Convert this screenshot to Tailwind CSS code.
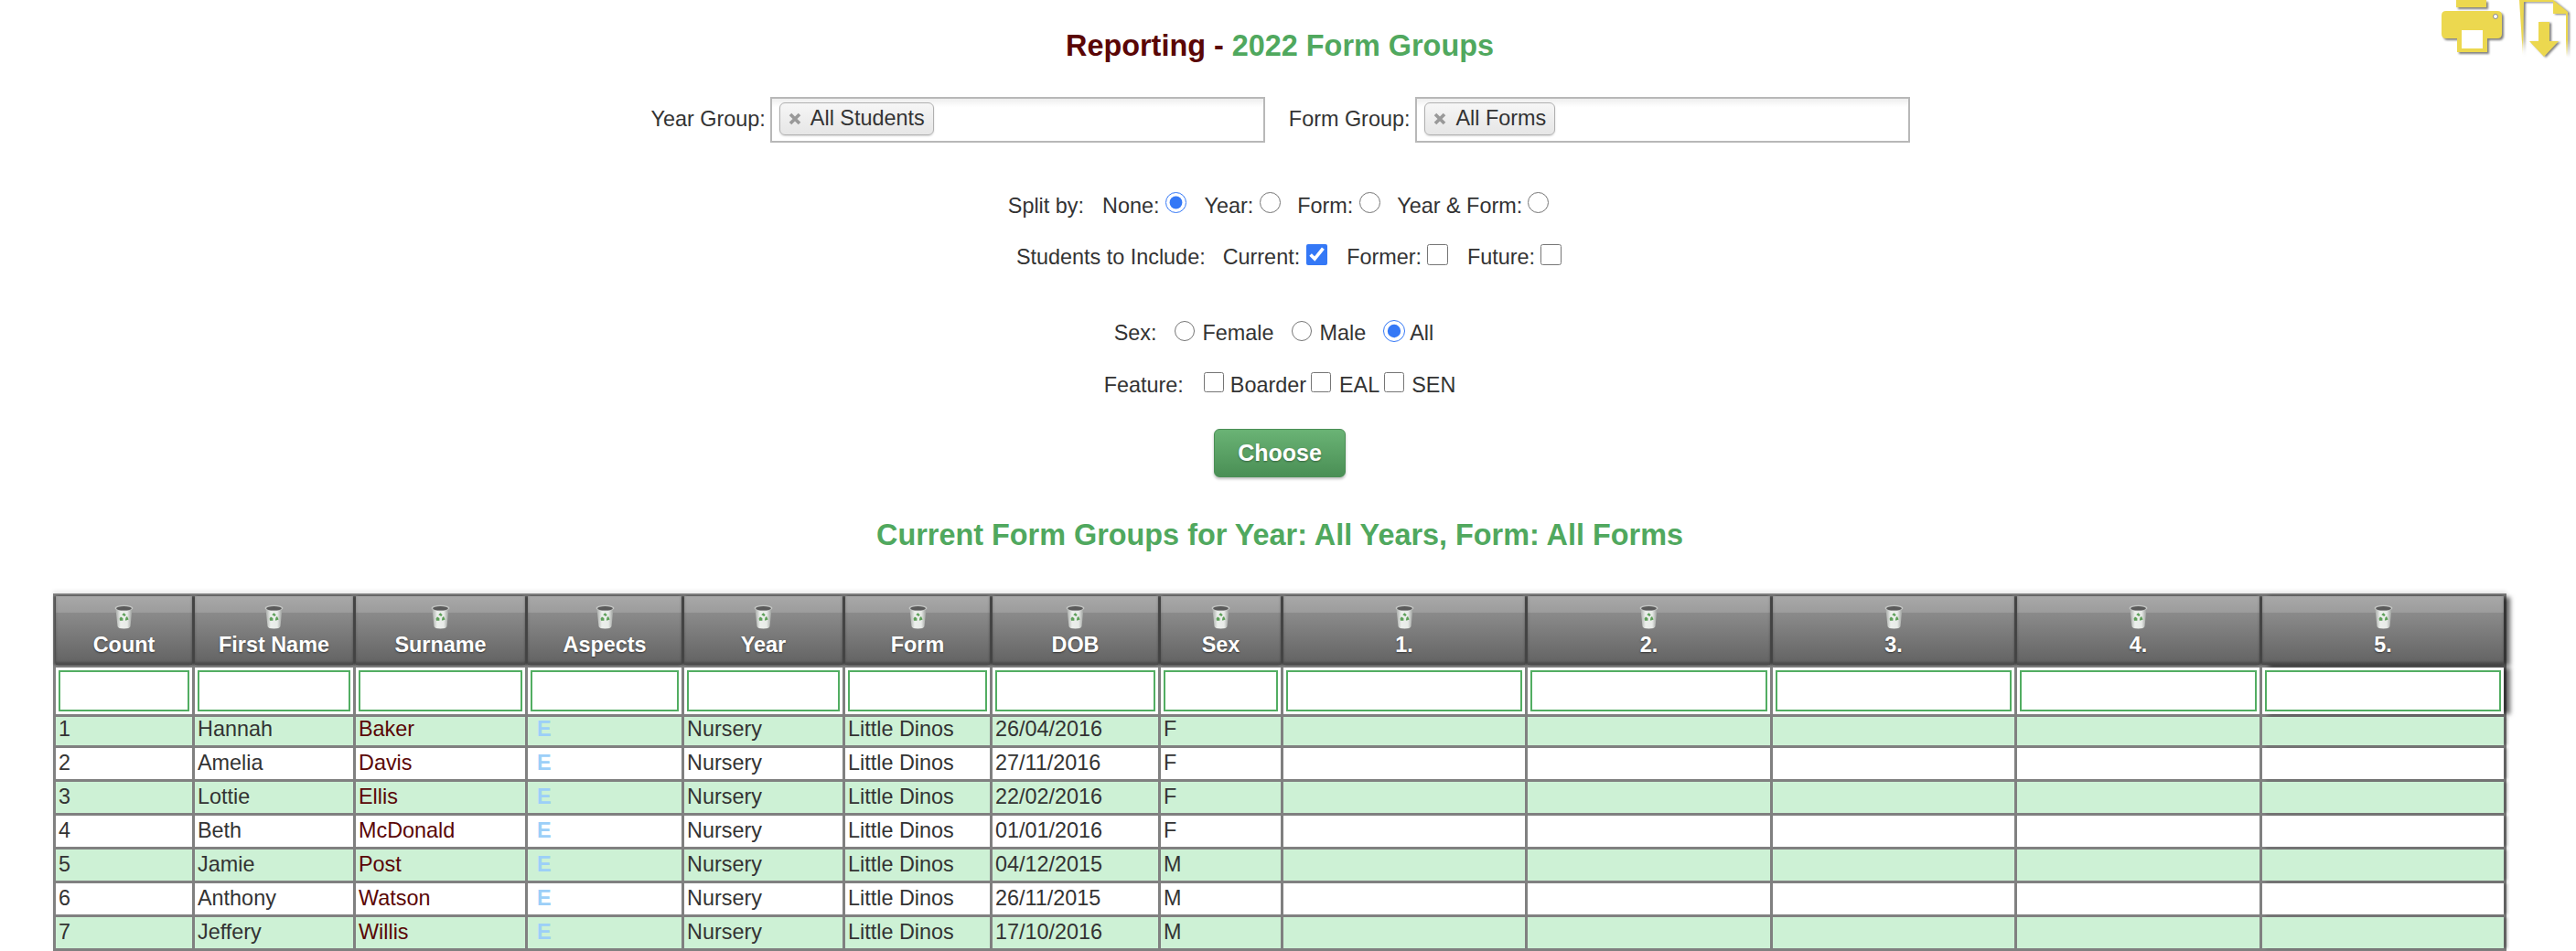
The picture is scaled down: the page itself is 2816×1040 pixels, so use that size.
<!DOCTYPE html>
<html lang="en">
  <head>
    <meta charset="UTF-8" />
    <title>Reporting - 2022 Form Groups</title>
    <script src="https://cdn.jsdelivr.net/npm/@tailwindcss/browser@4"></script>
  </head>
  <body class="bg-white min-h-screen overflow-hidden text-[23.4px] text-[#333] font-['Liberation_Sans',Arial,sans-serif]">
    <!-- shared bin icon -->
    <svg class="absolute w-0 h-0">
      <defs>
        <linearGradient id="binBody" x1="0" x2="1" y1="0" y2="0">
          <stop offset="0" stop-color="#a9aca9" />
          <stop offset="0.3" stop-color="#ecefec" />
          <stop offset="0.7" stop-color="#e8ebe8" />
          <stop offset="1" stop-color="#9a9d9a" />
        </linearGradient>
      </defs>
      <symbol id="bin" viewBox="0 0 21 27">
        <path d="M1.5 5 L3.5 24 Q4 26.5 10.5 26.5 Q17 26.5 17.5 24 L19.5 5 Z" fill="url(#binBody)" />
        <ellipse cx="10.5" cy="4" rx="10" ry="3.2" fill="#c4c6c4" />
        <ellipse cx="10.5" cy="4.3" rx="8.4" ry="2.3" fill="#5a5a5a" />
        <path d="M8.3 11.2 L10.5 9.2 L12.7 11.6 L11.2 12.9 Z M14 13 L15.6 16.6 L13 17.6 L11.9 17.6 L12.4 14.4 Z M9.4 17.7 L6 17.7 L5.6 15.6 L7 13.4 L9.4 15 Z" fill="#5d9f58" />
      </symbol>
    </svg>

    <!-- print / download -->
    <div class="absolute top-0 left-[2669px]">
      <svg width="70" height="62" viewBox="0 0 70 62" class="drop-shadow-[2px_2px_1px_rgba(0,0,0,0.5)]">
        <rect x="16" y="0" width="33" height="8" fill="#ecd84f" />
        <path d="M5 12 H61 Q66 12 66 17 V37 Q66 42 61 42 H50 V57 H17 V42 H5 Q0 42 0 37 V17 Q0 12 5 12 Z" fill="#ecd84f" />
        <rect x="22" y="33" width="23" height="20" fill="#fff" />
        <circle cx="59" cy="18" r="2.5" fill="#fff" stroke="#888" stroke-width="1" />
      </svg>
    </div>
    <div class="absolute top-0 left-[2754px]">
      <svg width="60" height="66" viewBox="0 0 60 66" class="drop-shadow-[2px_1px_1px_rgba(0,0,0,0.5)]">
        <defs>
          <linearGradient id="docFade" x1="0" x2="0" y1="0" y2="1">
            <stop offset="0.7" stop-color="#ecd84f" />
            <stop offset="1" stop-color="#ecd84f" stop-opacity="0" />
          </linearGradient>
        </defs>
        <path d="M0 0 H37 L53 13 V62 L51 62 V15 H37 V2 H5 L4 62 Z" fill="url(#docFade)" />
        <path d="M21 24 H33 V45 H43 L27 62 L11 45 H21 Z" fill="#ecd84f" />
      </svg>
    </div>

    <h1 class="mt-[30px] leading-[40px] text-[32.4px] font-bold text-center pr-[18px] text-[#5a0606]">
      Reporting - <span class="text-[#50a85e]">2022 Form Groups</span>
    </h1>

    <!-- selectors -->
    <div class="flex justify-center items-center mt-[36px] pr-[16px]">
      <label class="mr-[5px]">Year Group:</label>
      <div class="w-[541px] h-[50px] border-2 border-[#b8b8b8] bg-linear-to-b from-[#eee] to-white to-[20%] pl-[8px] pt-[4px]">
        <span class="inline-flex items-center h-[36px] pl-[9px] pr-[9px] border border-[#b0b0b0] rounded-[6px] bg-linear-to-b from-[#f6f6f6] to-[#e6e6e6] shadow-[0_1px_2px_rgba(0,0,0,0.15)]">
          <svg viewBox="0 0 14 14" class="w-[14px] h-[14px] mr-[10px]"><path d="M2 2 L12 12 M12 2 L2 12" stroke="#999" stroke-width="3.6" /></svg>All Students
        </span>
      </div>
      <label class="ml-[26px] mr-[6px]">Form Group:</label>
      <div class="w-[541px] h-[50px] border-2 border-[#b8b8b8] bg-linear-to-b from-[#eee] to-white to-[20%] pl-[8px] pt-[4px]">
        <span class="inline-flex items-center h-[36px] pl-[9px] pr-[9px] border border-[#b0b0b0] rounded-[6px] bg-linear-to-b from-[#f6f6f6] to-[#e6e6e6] shadow-[0_1px_2px_rgba(0,0,0,0.15)]">
          <svg viewBox="0 0 14 14" class="w-[14px] h-[14px] mr-[10px]"><path d="M2 2 L12 12 M12 2 L2 12" stroke="#999" stroke-width="3.6" /></svg>All Forms
        </span>
      </div>
    </div>

    <!-- split by -->
    <div class="flex justify-center items-center h-[32px] mt-[54px] pr-[21px]">
      <span class="mr-[20px]">Split by:</span>
      <span class="mr-[7px]">None:</span>
      <input type="radio" name="split" checked class="w-[23px] h-[23px] m-0 mb-[10px] mr-[19px] accent-[#3478f6]" />
      <span class="mr-[7px]">Year:</span>
      <input type="radio" name="split" class="w-[23px] h-[23px] m-0 mb-[10px] mr-[18px]" />
      <span class="mr-[7px]">Form:</span>
      <input type="radio" name="split" class="w-[23px] h-[23px] m-0 mb-[10px] mr-[18px]" />
      <span class="mr-[6px]">Year &amp; Form:</span>
      <input type="radio" name="split" class="w-[23px] h-[23px] m-0 mb-[10px]" />
    </div>

    <!-- students -->
    <div class="flex justify-center items-center h-[32px] mt-[24px] pl-[2px]">
      <span class="mr-[19px]">Students to Include:</span>
      <span class="mr-[7px]">Current:</span>
      <input type="checkbox" checked class="w-[23px] h-[23px] m-0 mb-[8px] mr-[21px] accent-[#3478f6]" />
      <span class="mr-[6px]">Former:</span>
      <input type="checkbox" class="w-[23px] h-[23px] m-0 mb-[8px] mr-[21px]" />
      <span class="mr-[6px]">Future:</span>
      <input type="checkbox" class="w-[23px] h-[23px] m-0 mb-[8px]" />
    </div>

    <!-- sex -->
    <div class="flex justify-center items-center h-[32px] mt-[51px] pr-[31px]">
      <span class="mr-[19px]">Sex:</span>
      <input type="radio" name="sex" class="w-[22px] h-[22px] m-0 mb-[6px] mr-[9px]" />
      <span class="mr-[19px]">Female</span>
      <input type="radio" name="sex" class="w-[22px] h-[22px] m-0 mb-[6px] mr-[9px]" />
      <span class="mr-[19px]">Male</span>
      <input type="radio" name="sex" checked class="w-[24px] h-[24px] m-0 mb-[6px] mr-[5px] accent-[#3478f6]" />
      <span>All</span>
    </div>

    <!-- feature -->
    <div class="flex justify-center items-center h-[32px] mt-[25px] pr-[18px]">
      <span class="mr-[22px]">Feature:</span>
      <input type="checkbox" class="w-[22px] h-[22px] m-0 mb-[8px] mr-[7px]" />
      <span class="mr-[5px]">Boarder</span>
      <input type="checkbox" class="w-[22px] h-[22px] m-0 mb-[8px] mr-[9px]" />
      <span class="mr-[5px]">EAL</span>
      <input type="checkbox" class="w-[22px] h-[22px] m-0 mb-[8px] mr-[8px]" />
      <span>SEN</span>
    </div>

    <div class="flex justify-center mt-[31px] pr-[18px]">
      <button class="w-[144px] h-[53px] rounded-[6px] border border-[#4a8f55] bg-linear-to-b from-[#6ab375] to-[#4a8f55] text-white font-bold text-[25px] [text-shadow:0_1px_2px_rgba(0,0,0,0.35)] shadow-[0_2px_3px_rgba(0,0,0,0.25)]">
        Choose
      </button>
    </div>

    <h2 class="mt-[43px] leading-[40px] text-[32.4px] font-bold text-center pr-[18px] text-[#50a85e]">
      Current Form Groups for Year: All Years, Form: All Forms
    </h2>

    <!-- report table -->
    <table class="table-fixed w-[2682px] ml-[58px] mt-[44px] bg-[#808080] border-separate border-spacing-[3px] shadow-[0_-3px_4px_rgba(0,0,0,0.08)]">
      <colgroup>
        <col class="w-[149px]" /><col class="w-[173px]" /><col class="w-[185px]" /><col class="w-[168px]" /><col class="w-[173px]" /><col class="w-[158px]" /><col class="w-[181px]" /><col class="w-[131px]" /><col class="w-[264px]" /><col class="w-[265px]" /><col class="w-[264px]" /><col class="w-[265px]" /><col class="w-[264px]" />
      </colgroup>
      <thead>
        <tr id="heads"></tr>
        <tr id="filters"></tr>
      </thead>
      <tbody id="rows"></tbody>
    </table>

    <template id="headCell">
      <th class="h-[75px] p-0 align-top text-white font-bold bg-[linear-gradient(#a8a8a8_0,#9c9c9c_18px,#8b8b8b_18px,#626262_100%)] shadow-[inset_0_-3px_3px_rgba(0,0,0,0.25),-2px_0_2px_rgba(0,0,0,0.4),2px_0_2px_rgba(0,0,0,0.4)] last:shadow-[inset_0_-3px_3px_rgba(0,0,0,0.25),-2px_0_2px_rgba(0,0,0,0.4),7px_1px_5px_rgba(0,0,0,0.6)] [text-shadow:0_1px_2px_rgba(0,0,0,0.5)]">
        <svg class="block mx-auto mt-[9px] w-[21px] h-[27px]"><use href="#bin" /></svg>
        <div class="label mt-[3px] leading-[28px]"></div>
      </th>
    </template>
    <template id="filterCell">
      <td class="h-[51px] p-0 bg-white last:shadow-[7px_0_5px_rgba(0,0,0,0.6)]"><input type="text" class="block w-[calc(100%-6px)] h-[45px] mx-auto border-2 border-[#52ad62] bg-white" /></td>
    </template>
    <template id="bodyRow">
      <tr class="h-[34px] first:h-[31px] even:bg-white odd:bg-[#cdf1d5] [&>td]:align-top [&>td]:leading-[32px] first:[&>td]:leading-[26px]">
        <td class="p-0 pl-[3px] bg-inherit"></td>
        <td class="p-0 pl-[3px] bg-inherit"></td>
        <td class="p-0 pl-[3px] bg-inherit text-[#5a0606]"></td>
        <td class="p-0 pl-[10px] bg-inherit font-bold text-[#9ccff8]">E</td>
        <td class="p-0 pl-[3px] bg-inherit">Nursery</td>
        <td class="p-0 pl-[3px] bg-inherit">Little Dinos</td>
        <td class="p-0 pl-[3px] bg-inherit"></td>
        <td class="p-0 pl-[3px] bg-inherit"></td>
        <td class="bg-inherit"></td><td class="bg-inherit"></td><td class="bg-inherit"></td><td class="bg-inherit"></td><td class="bg-inherit shadow-[4px_0_3px_rgba(0,0,0,0.25)]"></td>
      </tr>
    </template>

    <script>
      const heads = ["Count", "First Name", "Surname", "Aspects", "Year", "Form", "DOB", "Sex", "1.", "2.", "3.", "4.", "5."];
      const students = [
        ["Hannah", "Baker", "26/04/2016", "F"],
        ["Amelia", "Davis", "27/11/2016", "F"],
        ["Lottie", "Ellis", "22/02/2016", "F"],
        ["Beth", "McDonald", "01/01/2016", "F"],
        ["Jamie", "Post", "04/12/2015", "M"],
        ["Anthony", "Watson", "26/11/2015", "M"],
        ["Jeffery", "Willis", "17/10/2016", "M"],
      ];
      const headCell = document.getElementById("headCell");
      const filterCell = document.getElementById("filterCell");
      const bodyRow = document.getElementById("bodyRow");

      heads.forEach((h) => {
        const th = headCell.content.cloneNode(true);
        th.querySelector(".label").textContent = h;
        document.getElementById("heads").appendChild(th);
        document.getElementById("filters").appendChild(filterCell.content.cloneNode(true));
      });

      students.forEach((s, i) => {
        const row = bodyRow.content.cloneNode(true);
        const tds = row.querySelectorAll("td");
        tds[0].textContent = i + 1;
        tds[1].textContent = s[0];
        tds[2].textContent = s[1];
        tds[6].textContent = s[2];
        tds[7].textContent = s[3];
        document.getElementById("rows").appendChild(row);
      });
    </script>
  </body>
</html>
